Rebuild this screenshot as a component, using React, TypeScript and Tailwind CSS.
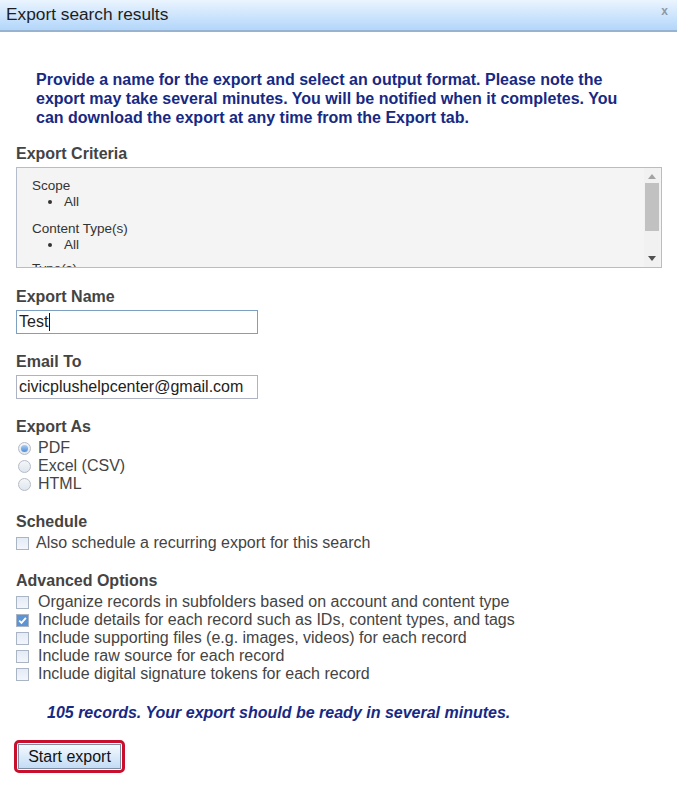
import React from 'react';

const font = { fontFamily: '"Liberation Sans", Arial, sans-serif' };

const Label: React.FC<{ children: React.ReactNode; className?: string }> = ({ children, className = '' }) => (
  <div className={`text-[16px] leading-[18px] font-bold text-[#444] ${className}`}>{children}</div>
);

const Radio: React.FC<{ checked?: boolean; label: string }> = ({ checked, label }) => (
  <div className="flex items-center h-[18px] pl-[18px]">
    <span className="w-[13px] h-[13px] rounded-full border border-[#b4bcc6] bg-gradient-to-b from-[#f4f6f8] to-[#dfe6ee] flex items-center justify-center">
      {checked && <span className="w-[7px] h-[7px] rounded-full bg-gradient-to-b from-[#a9cdf2] to-[#4d8ed6]" />}
    </span>
    <span className="ml-[7px] text-[16px] text-[#444]">{label}</span>
  </div>
);

const Check: React.FC<{ checked?: boolean; label: string; gap?: string }> = ({ checked, label, gap = 'ml-[9px]' }) => (
  <div className="flex items-center h-[18px] pl-[16px]">
    <span className="w-[13px] h-[13px] border border-[#a9b4c4] bg-gradient-to-b from-[#e3ebf5] to-[#f3f6fb] flex items-center justify-center">
      {checked && (
        <svg width="11" height="11" viewBox="0 0 11 11">
          <rect x="0" y="0" width="11" height="11" fill="#5b95d8" />
          <path d="M2.2 5.6 L4.5 7.9 L8.9 2.9" stroke="#fff" strokeWidth="1.8" fill="none" />
        </svg>
      )}
    </span>
    <span className={`${gap} text-[16px] text-[#444] whitespace-nowrap`}>{label}</span>
  </div>
);

const Group: React.FC<{ title: string; items: string[]; className?: string }> = ({ title, items, className = '' }) => (
  <div className={className}>
    <div className="text-[13.5px] leading-[16px] text-[#333]">{title}</div>
    {items.length > 0 && (
      <ul className="pl-[16px]">
        {items.map((i) => (
          <li key={i} className="text-[13.5px] leading-[15px] text-[#333] flex items-center">
            <span className="w-[4px] h-[4px] rounded-full bg-[#333] mr-[12px]" />
            {i}
          </li>
        ))}
      </ul>
    )}
  </div>
);

export default function App() {
  return (
    <div className="w-[677px] h-[785px] bg-white overflow-hidden" style={font}>
      <div className="h-[32px] border-b-2 border-[#98b3d0] bg-gradient-to-b from-[#eaf4fe] to-[#b3d6fa] flex items-center justify-between pl-[6px] pr-[9px]">
        <span className="text-[17.3px] text-[#1e1e1e]">Export search results</span>
        <span className="text-[12px] font-bold text-[#8e99a6] -mt-[8px]">x</span>
      </div>

      <div className="px-[16px]">
        <p className="mt-[38px] pl-[20px] pr-[22px] text-[16px] leading-[19px] font-bold text-[#172983]">
          Provide a name for the export and select an output format. Please note the export may take several minutes. You will be notified when it completes. You can download the export at any time from the Export tab.
        </p>

        <Label className="mt-[18px]">Export Criteria</Label>
        <div className="mt-[4px] h-[101px] w-[646px] border border-[#b5bccb] bg-[#f4f4f4] flex overflow-hidden">
          <div className="flex-1 pl-[15px] pt-[10px] overflow-hidden">
            <Group title="Scope" items={['All']} />
            <Group title="Content Type(s)" items={['All']} className="mt-[12px]" />
            <Group title="Type(s)" items={[]} className="mt-[9px]" />
          </div>
          <div className="w-[16px] mr-[1px] flex flex-col items-center bg-[#f1f1f1]">
            <svg width="8" height="5" viewBox="0 0 8 5" className="mt-[6px]">
              <path d="M0 5 L4 0 L8 5 Z" fill="#a3a3a3" />
            </svg>
            <div className="mt-[4px] w-[14px] h-[48px] bg-[#c1c1c1]" />
            <div className="flex-1" />
            <svg width="8" height="5" viewBox="0 0 8 5" className="mb-[6px]">
              <path d="M0 0 L8 0 L4 5 Z" fill="#505050" />
            </svg>
          </div>
        </div>

        <Label className="mt-[20px]">Export Name</Label>
        <div className="mt-[4px] w-[242px] h-[24px] border border-[#7d9fc2] flex items-center pl-[2px] text-[16px] text-[#222]">
          Test<span className="w-[1px] h-[18px] bg-[#111] ml-[1px]" />
        </div>

        <Label className="mt-[19px]">Email To</Label>
        <div className="mt-[4px] w-[242px] h-[24px] border border-[#adb3c2] flex items-center pl-[2px] text-[16px] text-[#222]">
          civicplushelpcenter@gmail.com
        </div>
      </div>

      <div className="px-[16px]">
        <Label className="mt-[19px]">Export As</Label>
      </div>
      <div className="mt-[3px]">
        <Radio checked label="PDF" />
        <Radio label="Excel (CSV)" />
        <Radio label="HTML" />
      </div>

      <div className="px-[16px]">
        <Label className="mt-[20px]">Schedule</Label>
      </div>
      <div className="mt-[3px]">
        <Check label="Also schedule a recurring export for this search" gap="ml-[7px]" />
      </div>

      <div className="px-[16px]">
        <Label className="mt-[20px]">Advanced Options</Label>
      </div>
      <div className="mt-[3px]">
        <Check label="Organize records in subfolders based on account and content type" />
        <Check checked label="Include details for each record such as IDs, content types, and tags" />
        <Check label="Include supporting files (e.g. images, videos) for each record" />
        <Check label="Include raw source for each record" />
        <Check label="Include digital signature tokens for each record" />
      </div>

      <p className="mt-[21px] pl-[47px] text-[16px] leading-[18px] font-bold italic text-[#172983]">
        105 records. Your export should be ready in several minutes.
      </p>

      <div className="mt-[18px] ml-[14px] w-[111px] h-[33px] rounded-[5px] border-[3px] border-[#c8102e] p-[1px] flex">
        <button className="flex-1 border border-[#7d8ea3] bg-gradient-to-b from-[#f4f9fe] to-[#c3dcf5] text-[16px] text-[#111] leading-none">
          Start export
        </button>
      </div>
    </div>
  );
}
